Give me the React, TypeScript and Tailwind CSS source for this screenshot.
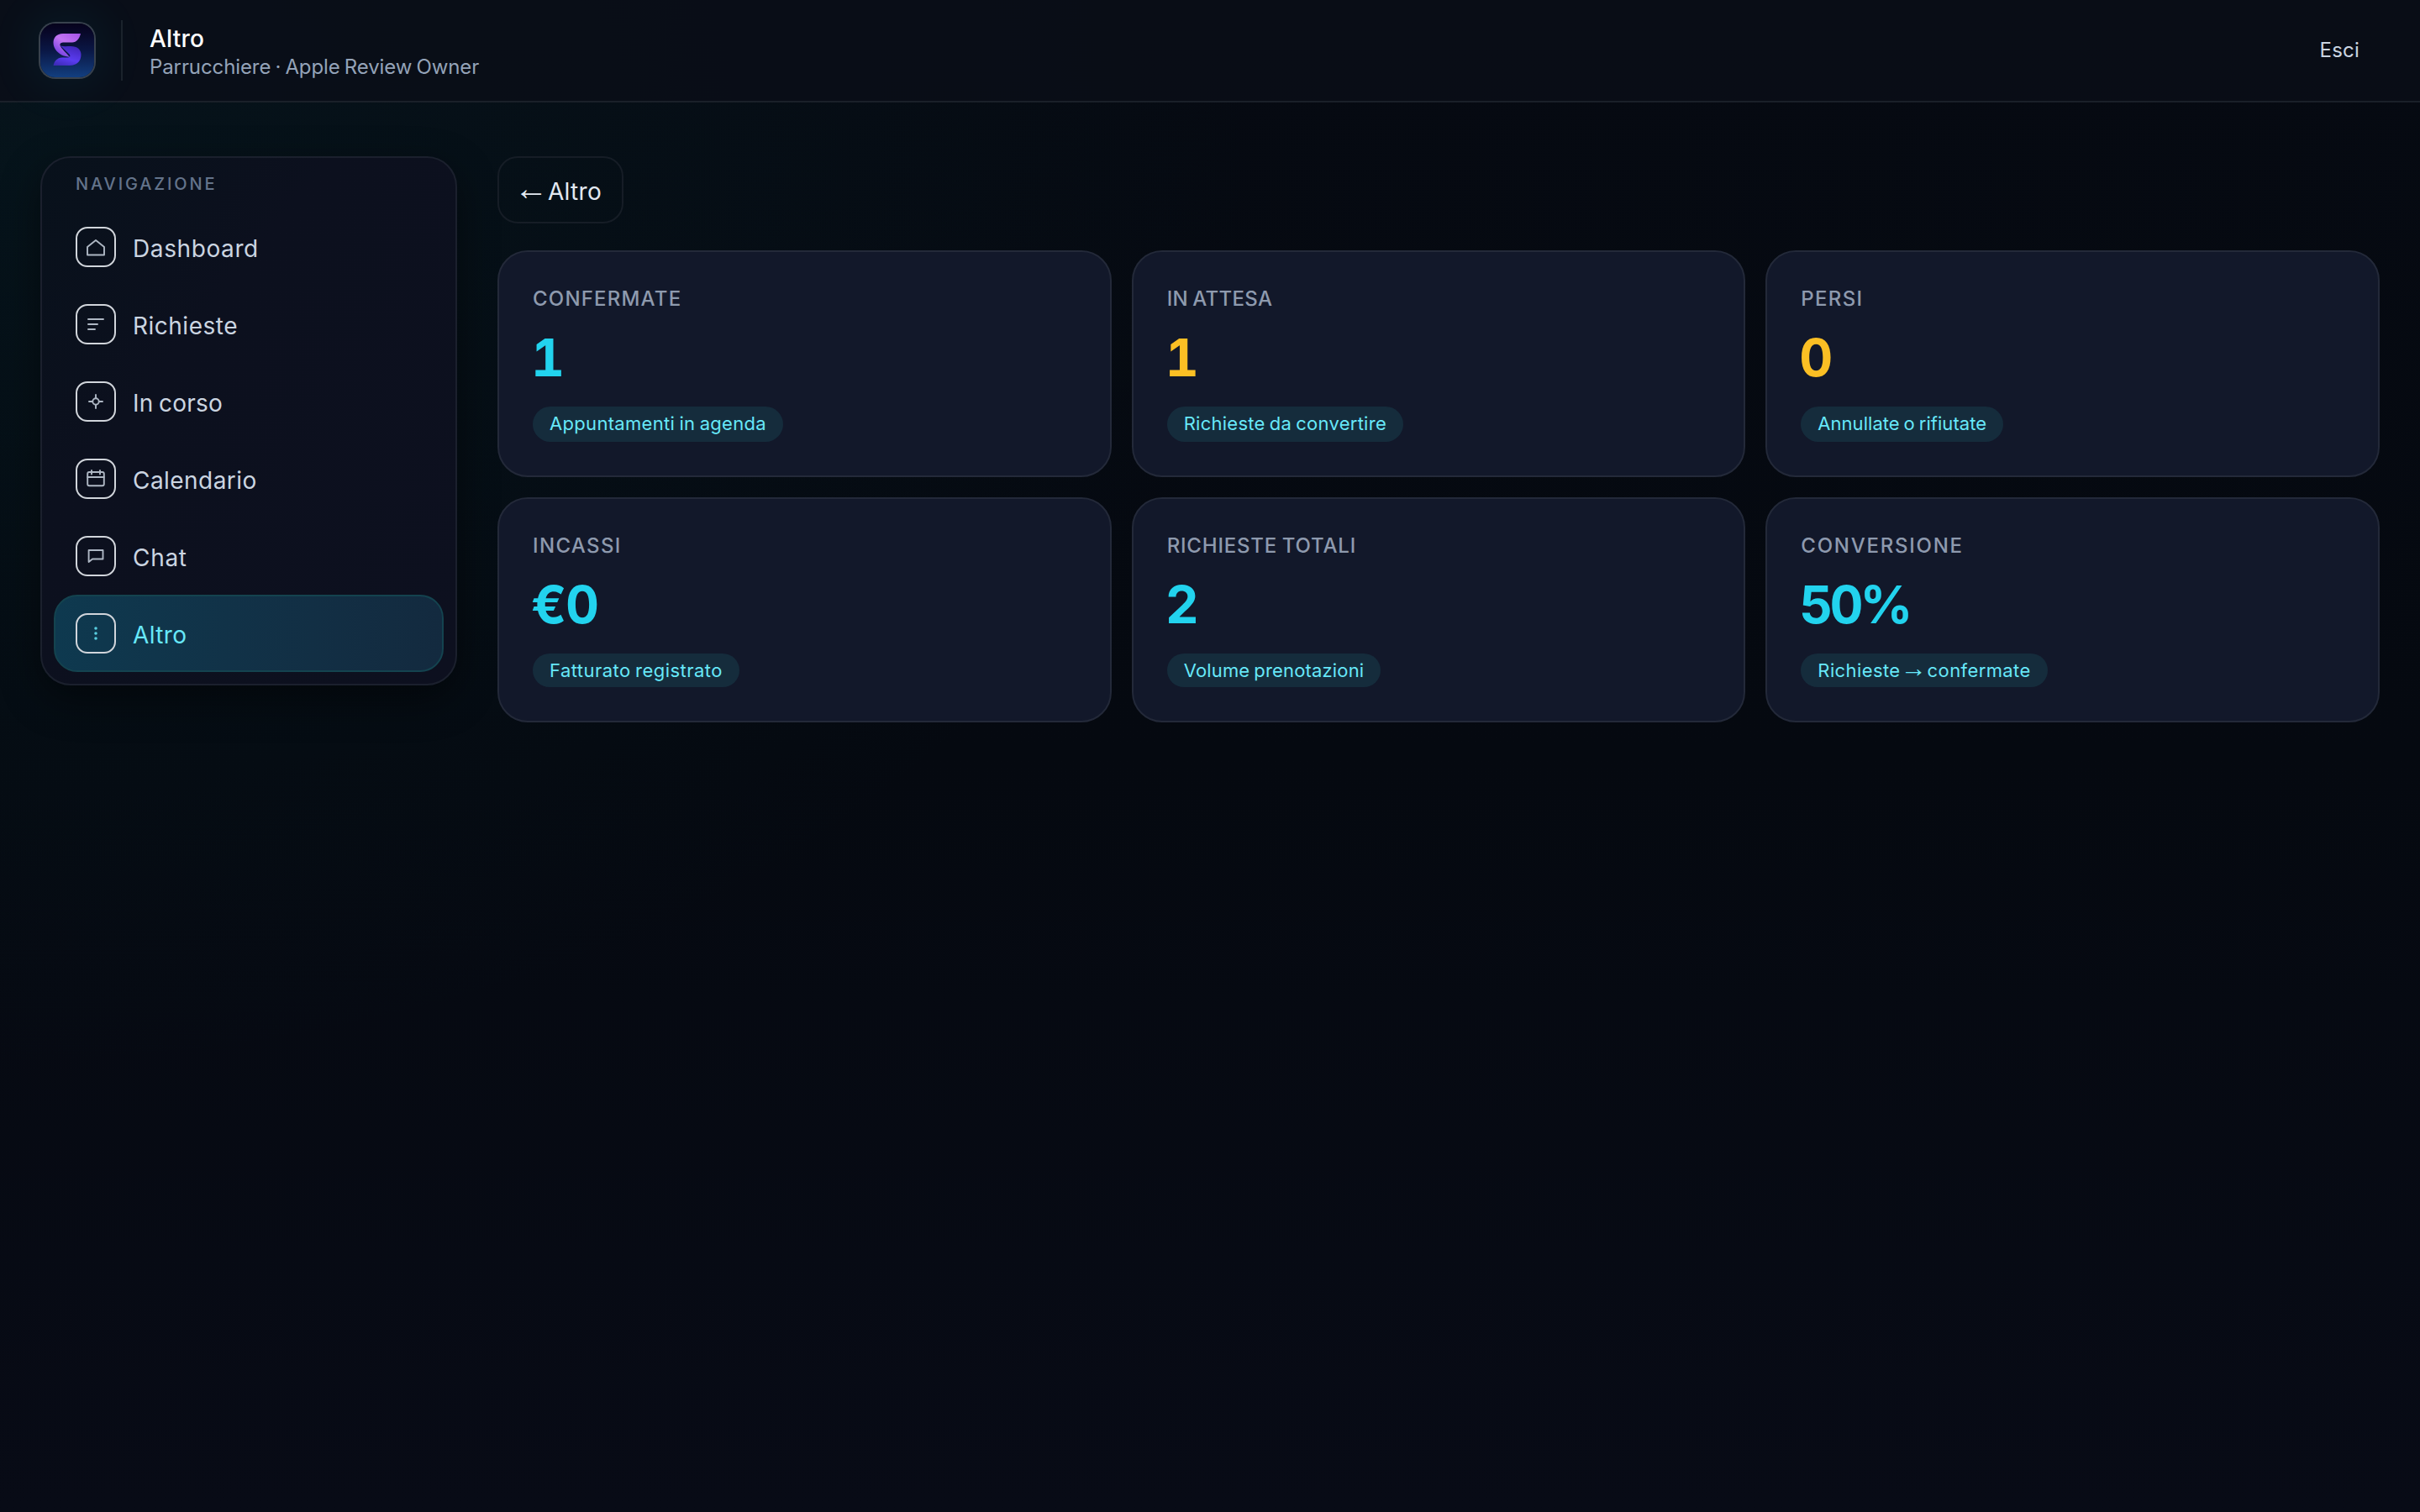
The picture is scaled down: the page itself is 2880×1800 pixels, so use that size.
import clsx from "clsx";
import type { ReactNode } from "react";

interface NavItem {
  label: string;
  tracking: string;
  icon: ReactNode;
  active?: boolean;
}

const navItems: NavItem[] = [
  {
    label: "Dashboard",
    tracking: "tracking-[0.6px]",
    icon: <path d="M12 4 22 12V21.5H2V12Z" />,
  },
  {
    label: "Richieste",
    tracking: "tracking-[0.5px]",
    icon: <path d="M3 6h18M3 12h11M3 18h8" />,
  },
  {
    label: "In corso",
    tracking: "tracking-[0.25px]",
    icon: (
      <>
        <circle cx="12" cy="12" r="3.7" />
        <path d="M12 4v4M12 16v4M4 12h4M16 12h4" />
      </>
    ),
  },
  {
    label: "Calendario",
    tracking: "tracking-[0.45px]",
    icon: (
      <>
        <rect x="2.2" y="4" width="19.6" height="16.2" rx="2" />
        <path d="M7 2v4.5M17 2v4.5M2.2 10h19.6" />
      </>
    ),
  },
  {
    label: "Chat",
    tracking: "tracking-[0.7px]",
    icon: <path d="M3.6 5H20.5V15.5H8L3.6 19Z" />,
  },
  {
    label: "Altro",
    tracking: "tracking-[0.4px]",
    active: true,
    icon: (
      <g fill="currentColor" stroke="none">
        <circle cx="12" cy="6" r="1.8" />
        <circle cx="12" cy="12" r="1.8" />
        <circle cx="12" cy="18" r="1.8" />
      </g>
    ),
  },
];

interface Stat {
  label: string;
  labelTracking: string;
  value: string;
  valueTracking?: string;
  tone: "cyan" | "amber";
  hint: ReactNode;
  hintTracking: string;
}

const stats: Stat[] = [
  {
    label: "Confermate",
    labelTracking: "tracking-[1.2px]",
    value: "1",
    tone: "cyan",
    hint: "Appuntamenti in agenda",
    hintTracking: "tracking-[0.32px]",
  },
  {
    label: "In attesa",
    labelTracking: "tracking-[0.31px]",
    value: "1",
    tone: "amber",
    hint: "Richieste da convertire",
    hintTracking: "tracking-[0.26px]",
  },
  {
    label: "Persi",
    labelTracking: "tracking-[1.3px]",
    value: "0",
    tone: "amber",
    hint: "Annullate o rifiutate",
    hintTracking: "tracking-[0.04px]",
  },
  {
    label: "Incassi",
    labelTracking: "tracking-[1.35px]",
    value: "€0",
    valueTracking: "tracking-[-1.5px]",
    tone: "cyan",
    hint: "Fatturato registrato",
    hintTracking: "tracking-[0.47px]",
  },
  {
    label: "Richieste totali",
    labelTracking: "tracking-[0.8px]",
    value: "2",
    tone: "cyan",
    hint: "Volume prenotazioni",
    hintTracking: "tracking-[0.16px]",
  },
  {
    label: "Conversione",
    labelTracking: "tracking-[1.75px]",
    value: "50%",
    valueTracking: "tracking-[-4px]",
    tone: "cyan",
    hint: (
      <>
        Richieste{" "}
        <span className="-mx-[5px] font-['Liberation_Sans'] text-[31px] leading-none">→</span>{" "}
        confermate
      </>
    ),
    hintTracking: "tracking-[0.4px]",
  },
];

function Logo() {
  return (
    <div className="h-16 w-16 rounded-[18px] bg-gradient-to-b from-[#06031c] via-[#0a1745] to-[#123f80] shadow-[0_0_0_2px_#38414d,0_0_60px_10px_rgba(34,211,238,0.07)]">
      <svg viewBox="0 0 64 64" className="h-16 w-16">
        <defs>
          <linearGradient id="upper" x1="1" y1="0" x2="0.2" y2="1">
            <stop offset="0" stopColor="#a452e8" />
            <stop offset="0.5" stopColor="#c274f2" />
            <stop offset="1" stopColor="#6a3ae0" />
          </linearGradient>
          <linearGradient id="lower" x1="0.6" y1="0" x2="0.2" y2="1">
            <stop offset="0" stopColor="#4327bd" />
            <stop offset="0.6" stopColor="#5a3cf0" />
            <stop offset="1" stopColor="#3d2bb8" />
          </linearGradient>
        </defs>
        <path
          fill="url(#lower)"
          d="M24 26.5C28 27.5 31 27 36 27C44 27 48.5 31 48.5 37C48.5 45 43 50 35 50H15.5C17 44 20 41 26 40.5H33C36 40 36 38 34 36Z"
        />
        <path
          fill="url(#upper)"
          d="M48 12H27C19 12 15.5 17 15.5 23C15.5 30 21 36 28 38.5L35 40C31 35 25 30 23.5 26C23 23.5 25 22.5 28 22.5H38C43 22.5 46.5 18 48 12Z"
        />
      </svg>
    </div>
  );
}

function Header() {
  return (
    <header className="flex h-[122px] items-center border-b-2 border-[#1a2029] bg-[#0a0e18]/80 px-12">
      <Logo />
      <div className="ml-8 h-[72px] w-0.5 bg-[#1b232c]" />
      <div className="mt-[3px] ml-8">
        <h1 className="text-[28px] leading-9 font-medium tracking-[0.2px] text-white">Altro</h1>
        <p className="text-2xl leading-[31px] tracking-[-0.1px] text-[#94a3b8] [word-spacing:-1.5px]">
          Parrucchiere · Apple Review Owner
        </p>
      </div>
      <button className="ml-auto px-6 text-2xl tracking-[0.2px] text-[#cbd5e1]">Esci</button>
    </header>
  );
}

function Sidebar() {
  return (
    <aside className="h-[630px] w-[496px] shrink-0 rounded-[36px] border-2 border-[#1b202d] bg-gradient-to-br from-[#08111b] via-[#0c101e] via-35% to-[#0d101f] p-3.5 shadow-[0_16px_48px_rgba(0,0,0,0.45)]">
      <p className="h-[46px] pl-[26px] text-xl leading-[34px] font-medium tracking-[2.86px] text-[#64748b] uppercase">
        Navigazione
      </p>
      <nav>
        {navItems.map((item) => (
          <a
            key={item.label}
            className={clsx(
              "flex h-[92px] items-center gap-5 rounded-[28px] border-2 px-6",
              item.active
                ? "border-[#14434f] bg-gradient-to-r from-[#0e394f] to-[#132a3f] text-[#67e8f9]"
                : "border-transparent text-[#cbd5e1]"
            )}
          >
            <span className="flex h-12 w-12 items-center justify-center rounded-[14px] border-2 border-[#d1d5db]">
              <svg
                viewBox="0 0 24 24"
                className="h-6 w-6 shrink-0 opacity-85"
                fill="none"
                stroke="currentColor"
                strokeWidth="1.9"
                strokeLinecap="round"
                strokeLinejoin="round"
              >
                {item.icon}
              </svg>
            </span>
            <span className={clsx("pt-1 text-[28px] leading-10 [word-spacing:-1.7px]", item.tracking)}>
              {item.label}
            </span>
          </a>
        ))}
      </nav>
    </aside>
  );
}

function StatCard({ stat }: { stat: Stat }) {
  return (
    <div className="flex flex-col items-start rounded-[36px] border-2 border-[#232939] bg-[#12182a] p-10">
      <p
        className={clsx(
          "text-2xl leading-8 font-medium text-[#8e9aae] uppercase [word-spacing:-1.4px]",
          stat.labelTracking
        )}
      >
        {stat.label}
      </p>
      <p
        className={clsx(
          "mt-[19px] -ml-0.5 text-[62px] leading-[70px] font-bold tabular-nums",
          stat.valueTracking,
          stat.tone === "cyan" ? "text-[#22d3ee]" : "text-[#fbbf24]"
        )}
      >
        {stat.value}
      </p>
      <span
        className={clsx(
          "mt-[23px] flex-1 rounded-full bg-[#152c3c] px-5 text-[22px] leading-10 text-[#67e8f9] [word-spacing:-1.3px]",
          stat.hintTracking
        )}
      >
        {stat.hint}
      </span>
    </div>
  );
}

export default function App() {
  return (
    <div className="min-h-screen bg-[#05080f] bg-[radial-gradient(ellipse_1500px_1100px_at_0%_10%,rgba(6,90,95,0.12),transparent),linear-gradient(to_bottom,#060a12,#050910_50%,#080b16)] font-['Inter',sans-serif]">
      <Header />
      <div className="flex gap-12 px-12 pt-16">
        <Sidebar />
        <main className="flex-1">
          <button className="flex h-20 items-center rounded-3xl border-2 border-[#161d26] pr-6 pl-[18px] text-[28px] text-[#e2e8f0]">
            <span className="pb-1 font-['Liberation_Sans'] text-[40px] leading-none">←</span>
            <span className="pt-[3px] tracking-[0.3px]">Altro</span>
          </button>
          <div className="mt-8 grid grid-cols-3 grid-rows-[270px_268px] gap-6">
            {stats.map((stat) => (
              <StatCard key={stat.label} stat={stat} />
            ))}
          </div>
        </main>
      </div>
    </div>
  );
}
